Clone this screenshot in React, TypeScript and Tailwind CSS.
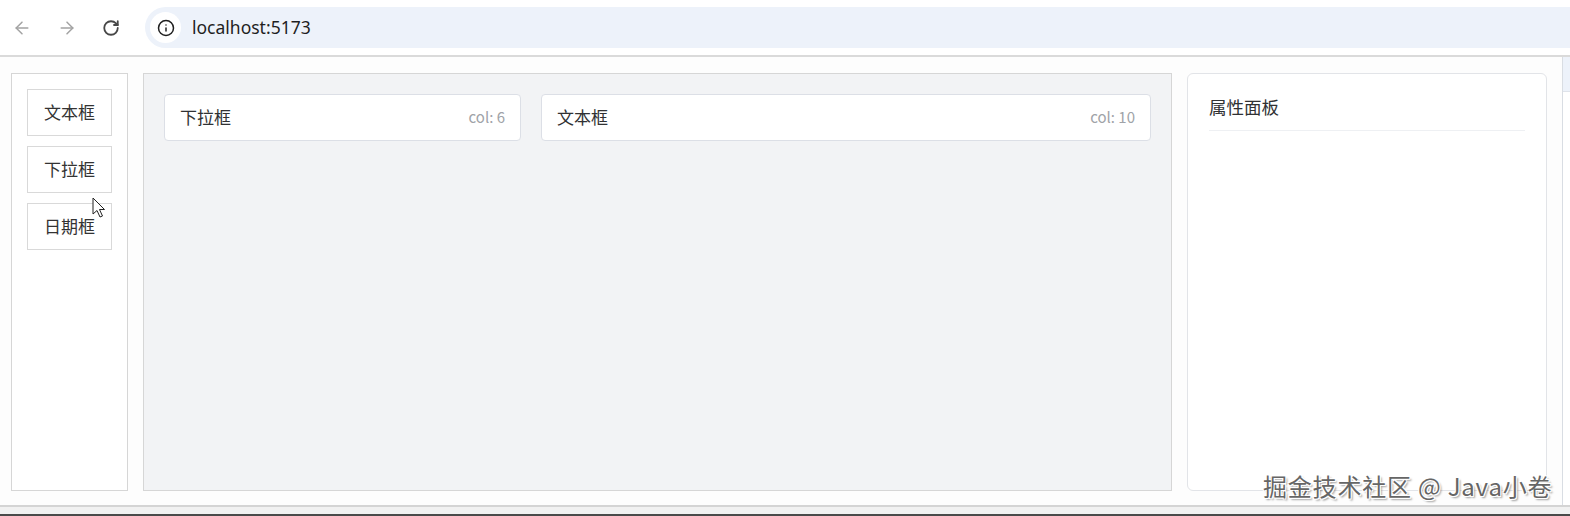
import React from 'react';
import { ArrowLeft, ArrowRight, RotateCw, Info } from 'lucide-react';

const cjk = { fontFamily: '"Microsoft YaHei", "Noto Sans CJK SC", "Liberation Sans", sans-serif' };

const palette = ['文本框', '下拉框', '日期框'];

const fields = [
  { label: '下拉框', col: 6, width: 'w-[357px]' },
  { label: '文本框', col: 10, width: 'w-[610px]' },
];

const BrowserBar = () => (
  <div className="flex h-[56px] items-center bg-white">
    <div className="flex w-[145px] items-center pl-[12px] gap-[25px]">
      <ArrowLeft size={20} strokeWidth={1.8} className="text-[#a3a3a3]" />
      <ArrowRight size={20} strokeWidth={1.8} className="text-[#a3a3a3]" />
      <RotateCw size={18} strokeWidth={2.4} className="text-[#474747]" />
    </div>
    <div className="flex h-[41px] flex-1 items-center rounded-l-full bg-[#edf2fa] pl-[5px]">
      <div className="flex h-[31px] w-[31px] items-center justify-center rounded-full bg-white">
        <Info size={18} strokeWidth={2} className="text-[#1f1f1f]" />
      </div>
      <span className="ml-[11px] text-[17.5px] text-[#1f1f1f]" style={{ fontFamily: '"Noto Sans", "Liberation Sans", sans-serif' }}>
        localhost:5173
      </span>
    </div>
  </div>
);

const Cursor = () => (
  <svg className="absolute left-[92px] top-[197px]" width="14" height="22" viewBox="0 0 14 22">
    <path d="M1 1 L1 17 L5 13.5 L8 20 L10.5 19 L7.5 12.5 L12.5 12.5 Z" fill="white" stroke="#222" strokeWidth="1" strokeLinejoin="round" />
  </svg>
);

export default function App() {
  return (
    <div className="relative flex h-[516px] w-[1570px] flex-col overflow-hidden bg-white" style={cjk}>
      <BrowserBar />
      <div className="h-[2px] bg-[#dadada]" />
      <div className="flex flex-1">
        <div className="flex w-[1563px] gap-[15px] border-r border-[#d9dde3] bg-[#fdfdfd] pl-[11px] pt-[16px] pb-[14px]">
          {/* component palette */}
          <div className="flex h-[418px] w-[117px] flex-col gap-[10px] border border-[#d6d6d6] bg-white p-[15px]">
            {palette.map((name) => (
              <div
                key={name}
                className="flex h-[47px] items-center justify-center border border-[#d9d9d9] bg-white pb-[1px] text-[17px] text-[#333]"
              >
                {name}
              </div>
            ))}
          </div>

          {/* canvas */}
          <div className="flex h-[418px] w-[1029px] items-start gap-[20px] border border-[#d6d6d6] bg-[#f2f3f5] p-[20px]">
            {fields.map((f) => (
              <div
                key={f.label}
                className={`flex h-[47px] ${f.width} items-center justify-between rounded-[4px] border border-[#dcdfe6] bg-white px-[15px] pb-[1px]`}
              >
                <span className="text-[17px] text-[#303133]">{f.label}</span>
                <span className="text-[15px] text-[#a0a3a8]">col: {f.col}</span>
              </div>
            ))}
          </div>

          {/* property panel */}
          <div className="flex h-[418px] w-[360px] flex-col rounded-[6px] border border-[#e2e4e8] bg-white px-[21px] pt-[20px]">
            <div className="border-b border-[#eef0f3] pb-[10px] text-[17.5px] text-[#303133]">属性面板</div>
          </div>
        </div>
        <div className="flex flex-1 flex-col">
          <div className="h-[35px] border-b border-[#dfe3ea] bg-[#edf2fa]" />
        </div>
      </div>
      <div className="h-[2px] bg-[#d4d4d4]" />
      <div className="h-[7px] bg-[#f1f1f1]" />
      <div className="h-[2px] bg-[#4a4a4a]" />

      <div
        className="absolute left-[1263px] top-[468px] text-[24px] tracking-[0.8px] text-[#666]"
        style={{ textShadow: '1px 1px 0 #fff, -1px -1px 0 #fff, 1px -1px 0 #fff, -1px 1px 0 #fff, 2px 2px 2px rgba(0,0,0,0.4)' }}
      >
        掘金技术社区 @ Java小卷
      </div>
      <Cursor />
    </div>
  );
}
